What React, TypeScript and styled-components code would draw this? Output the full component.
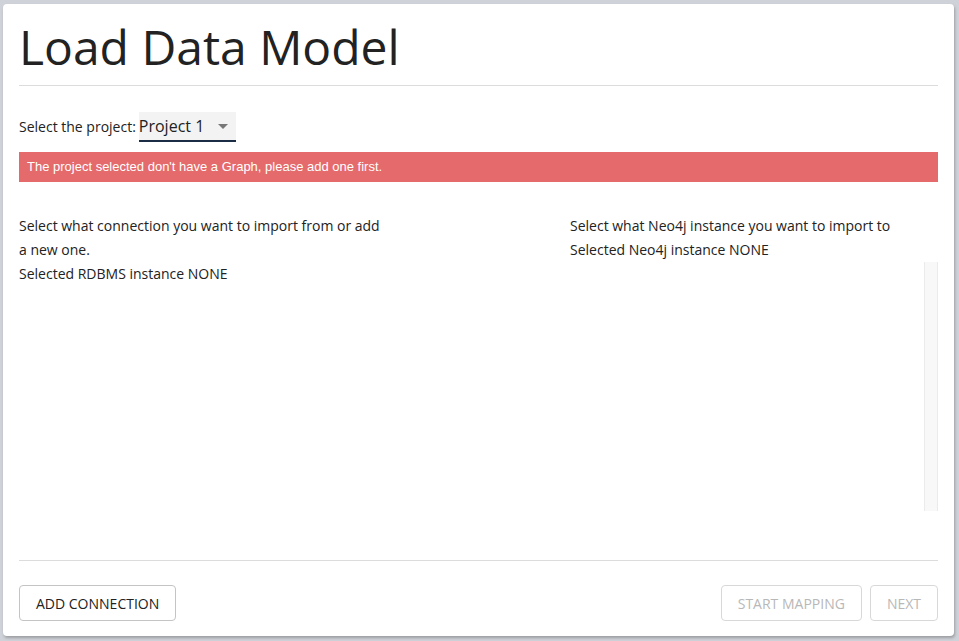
import styled, { createGlobalStyle } from "styled-components";

const GlobalStyle = createGlobalStyle`
  html, body {
    margin: 0;
    padding: 0;
    background: #cfd2d8;
    font-family: "Open Sans", "Noto Sans", sans-serif;
    color: #222;
  }
`;

const LoadDataModel = () => {
  return (
    <Page>
      <GlobalStyle />
      <Card>
        <Title>Load Data Model</Title>
        <Divider />
        <ProjectRow>
          <Label>Select the project:</Label>
          <ProjectSelect>
            <span>Project 1</span>
            <Caret />
          </ProjectSelect>
        </ProjectRow>
        <Alert>The project selected don't have a Graph, please add one first.</Alert>
        <Columns>
          <Column>
            <Text>Select what connection you want to import from or add a new one.</Text>
            <Text>Selected RDBMS instance NONE</Text>
          </Column>
          <Column>
            <Text>Select what Neo4j instance you want to import to</Text>
            <Text>Selected Neo4j instance NONE</Text>
            <ListBox>
              <ListItems />
              <ScrollTrack />
            </ListBox>
          </Column>
        </Columns>
        <Divider />
        <Footer>
          <Button>Add connection</Button>
          <Actions>
            <Button disabled>Start mapping</Button>
            <Button disabled>Next</Button>
          </Actions>
        </Footer>
      </Card>
    </Page>
  );
};

const Page = styled.div`
  width: 959px;
  height: 641px;
  padding: 4px 5px 5px 3px;
  box-sizing: border-box;
`;
const Card = styled.div`
  height: 632px;
  box-sizing: border-box;
  background: #fff;
  border-radius: 4px;
  box-shadow: 1px 2px 3px rgba(0, 0, 0, 0.25);
  padding: 0 16px 0 16px;
  display: flex;
  flex-direction: column;
`;
const Title = styled.h1`
  margin: 11px 0 0 0;
  font-size: 48px;
  font-weight: 400;
  line-height: 64px;
  height: 70px;
  color: #222;
`;
const Divider = styled.hr`
  margin: 0;
  border: none;
  border-top: 1px solid #dcdcdc;
`;
const ProjectRow = styled.div`
  display: flex;
  align-items: flex-end;
  margin-top: 24px;
  height: 32px;
`;
const Label = styled.span`
  font-size: 14px;
  line-height: 20px;
  margin-bottom: 5px;
  margin-right: 3px;
`;
const ProjectSelect = styled.div`
  display: flex;
  align-items: center;
  justify-content: space-between;
  width: 97px;
  height: 30px;
  box-sizing: border-box;
  background: #f3f3f3;
  border-bottom: 2px solid #1b2d45;
  font-size: 16px;
  padding: 0 8px 0 0;
  color: #222;
`;
const Caret = styled.span`
  width: 0;
  height: 0;
  border-left: 5px solid transparent;
  border-right: 5px solid transparent;
  border-top: 5px solid #777;
`;
const Alert = styled.div`
  margin-top: 10px;
  height: 30px;
  background: #e46a6b;
  color: #fff;
  font-family: "Liberation Sans", Arial, sans-serif;
  font-size: 13px;
  line-height: 30px;
  padding: 0 8px;
`;
const Columns = styled.div`
  display: grid;
  grid-template-columns: 372px 1fr;
  column-gap: 179px;
  margin-top: 32px;
  flex: 1;
`;
const Column = styled.div`
  display: flex;
  flex-direction: column;
`;
const Text = styled.p`
  margin: 0;
  font-size: 14px;
  line-height: 24px;
  color: #222;
`;
const ListBox = styled.div`
  display: flex;
  height: 249px;
`;
const ListItems = styled.div`
  flex: 1;
`;
const ScrollTrack = styled.div`
  width: 12px;
  background: #f8f8f8;
  border-left: 1px solid #ebebeb;
  border-right: 1px solid #ebebeb;
`;
const Footer = styled.div`
  display: flex;
  justify-content: space-between;
  padding: 24px 0 15px 0;
`;
const Actions = styled.div`
  display: flex;
  gap: 8px;
`;
const Button = styled.button`
  height: 36px;
  padding: 0 16px;
  background: #fff;
  border: 1px solid ${(p) => (p.disabled ? "#d8d8d8" : "#c4c4c4")};
  border-radius: 4px;
  font-family: "Open Sans", "Noto Sans", sans-serif;
  font-size: 14px;
  text-transform: uppercase;
  color: ${(p) => (p.disabled ? "#b8b8b8" : "#222")};
  cursor: ${(p) => (p.disabled ? "default" : "pointer")};
`;

export default LoadDataModel;
